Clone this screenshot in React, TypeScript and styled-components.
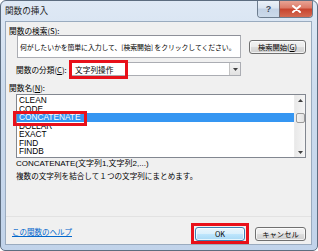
import React from 'react'
import styled, { createGlobalStyle } from 'styled-components'

const jp = `"Noto Sans CJK JP", "Noto Sans", sans-serif`
const latin = `"Liberation Sans", Arial, sans-serif`

const GlobalStyle = createGlobalStyle`
  html, body {
    margin: 0;
    padding: 0;
    background: #ffffff;
  }
  body {
    width: 318px;
    height: 251px;
    overflow: hidden;
    font-family: ${jp};
  }
  * { box-sizing: border-box; }
`

const Window = styled.div`
  width: 318px;
  height: 251px;
  display: flex;
  flex-direction: column;
  border: 1px solid #5d6d80;
  border-radius: 6px 6px 5px 5px;
  background: linear-gradient(180deg, #dfe9f5 0%, #cddcee 35%, #c1d3ea 100%);
  overflow: hidden;
`

const TitleBar = styled.div`
  height: 20px;
  flex: none;
  display: flex;
  align-items: flex-start;
`

const Title = styled.div`
  padding-left: 4px;
  line-height: 19px;
  font-size: 8.6px;
  color: #1e1e1e;
  font-family: ${jp};
`

const CaptionButtons = styled.div`
  margin-left: auto;
  margin-right: 4px;
  margin-top: -1px;
  display: flex;
  border: 1px solid #6d7d8f;
  border-top: none;
  border-radius: 0 0 4px 4px;
  overflow: hidden;
`

const CaptionButton = styled.div<{ $close?: boolean }>`
  height: 17px;
  width: ${p => (p.$close ? 33 : 21)}px;
  display: flex;
  align-items: center;
  justify-content: center;
  background: ${p =>
    p.$close
      ? 'linear-gradient(180deg, #e9a99b 0%, #dd7c69 45%, #c8452f 55%, #d36a52 100%)'
      : 'linear-gradient(180deg, #eef3f9 0%, #dbe5f1 45%, #c3d2e5 55%, #ccdaea 100%)'};
  border-left: ${p => (p.$close ? '1px solid #7a6a70' : 'none')};
  color: ${p => (p.$close ? '#ffffff' : '#3d4a5a')};
  font-family: ${latin};
  font-size: 9px;
  font-weight: bold;
`

const Client = styled.div`
  flex: 1;
  margin: 0 5px 5px 4px;
  background: #f0f0f0;
  border: 1px solid #9aabbf;
  display: flex;
  flex-direction: column;
  padding: 4px 5px 0 3px;
  font-family: ${jp};
  font-size: 7.7px;
  color: #000000;
`

const Label = styled.div<{ $indent?: number; $top?: number }>`
  height: 9px;
  line-height: 9px;
  padding-left: ${p => p.$indent ?? 0}px;
  margin-top: ${p => p.$top ?? 0}px;
  white-space: nowrap;
`

const U = styled.span`
  text-decoration: underline;
`

const SearchRow = styled.div`
  height: 23px;
  display: flex;
  align-items: center;
  padding-left: 8px;
`

const SearchBox = styled.div`
  width: 224px;
  height: 23px;
  background: #ffffff;
  border: 1px solid #abadb3;
  border-top-color: #8e9099;
  display: flex;
  align-items: center;
  padding-left: 2px;
  font-size: 6.9px;
  letter-spacing: -0.1px;
  white-space: nowrap;
  overflow: hidden;
`

const Button = styled.div<{ $w: number; $default?: boolean }>`
  width: ${p => p.$w}px;
  height: 14px;
  flex: none;
  display: flex;
  align-items: center;
  justify-content: center;
  border: 1px solid ${p => (p.$default ? '#3c7fb1' : '#707070')};
  border-radius: 3px;
  background: ${p =>
    p.$default
      ? 'linear-gradient(180deg, #eaf6fd 0%, #d9f0fc 50%, #bee6fd 51%, #a7d9f5 100%)'
      : 'linear-gradient(180deg, #f2f2f2 0%, #ebebeb 50%, #dddddd 51%, #cfcfcf 100%)'};
  box-shadow: inset 0 0 0 1px rgba(255, 255, 255, 0.7);
  font-size: 7.3px;
  white-space: nowrap;
  color: #000000;
`

const SearchButton = styled(Button)`
  margin-left: 8px;
`

const CategoryRow = styled.div`
  margin-top: 4px;
  height: 14px;
  display: flex;
  align-items: center;
  padding-left: 7px;
`

const CategoryLabel = styled.div`
  width: 54px;
  white-space: nowrap;
`

const Combo = styled.div`
  position: relative;
  width: 171px;
  height: 14px;
  background: #ffffff;
  border: 1px solid #abadb3;
  display: flex;
  align-items: center;
  padding-left: 4px;
`

const ComboValue = styled.div`
  flex: 1;
  white-space: nowrap;
`

const ComboArrow = styled.div`
  width: 11px;
  height: 12px;
  border-left: 1px solid #c3c3c3;
  background: linear-gradient(180deg, #f4f4f4 0%, #e2e2e2 100%);
  display: flex;
  align-items: center;
  justify-content: center;
`

const Mark = styled.div<{ $top: number; $left: number; $w: number; $h: number }>`
  position: absolute;
  top: ${p => p.$top}px;
  left: ${p => p.$left}px;
  width: ${p => p.$w}px;
  height: ${p => p.$h}px;
  border: 3px solid #e8101a;
  pointer-events: none;
`

const ListWrap = styled.div`
  position: relative;
  margin-top: 2px;
  margin-left: 7px;
`

const ListBox = styled.div`
  height: 64px;
  background: #ffffff;
  border: 1px solid #828790;
  display: flex;
`

const Items = styled.div`
  flex: 1;
  padding-top: 1px;
`

const Item = styled.div<{ $selected?: boolean }>`
  height: 8.5px;
  line-height: 8.5px;
  padding-left: 2px;
  font-family: ${latin};
  font-size: 8.3px;
  color: ${p => (p.$selected ? '#ffffff' : '#000000')};
  background: ${p => (p.$selected ? '#3596f2' : 'transparent')};
`

const ScrollBar = styled.div`
  width: 11px;
  display: flex;
  flex-direction: column;
  background: linear-gradient(90deg, #e9e9e9 0%, #f5f5f5 100%);
  border-left: 1px solid #ececec;
`

const ScrollArrow = styled.div`
  height: 10px;
  display: flex;
  align-items: center;
  justify-content: center;
`

const ScrollTrack = styled.div`
  flex: 1;
  padding-top: 8px;
`

const Thumb = styled.div`
  height: 10px;
  margin: 0 0.5px;
  border: 1px solid #9a9a9a;
  border-radius: 2px;
  background: linear-gradient(90deg, #f3f3f3 0%, #e2e2e2 100%);
`

const Desc = styled.div<{ $top: number; $latin?: boolean }>`
  margin-top: ${p => p.$top}px;
  padding-left: 7px;
  height: 9px;
  line-height: 9px;
  white-space: nowrap;
  font-family: ${p => (p.$latin ? `"Liberation Sans", "Noto Sans CJK JP", sans-serif` : jp)};
  font-size: ${p => (p.$latin ? 8 : 7.6)}px;
`

const Footer = styled.div`
  margin-top: auto;
  margin-left: -3px;
  margin-right: -5px;
  border-top: 1px solid #e2e2e2;
  padding: 9px 5px 3px 6px;
  display: flex;
  align-items: center;
`

const HelpLink = styled.div`
  color: #0066cc;
  text-decoration: underline;
  font-size: 7.5px;
  margin-bottom: 4px;
  white-space: nowrap;
`

const OkWrap = styled.div`
  position: relative;
  margin-left: auto;
`

const CancelButton = styled(Button)`
  margin-left: 10px;
`

const functions = ['CLEAN', 'CODE', 'CONCATENATE', 'DOLLAR', 'EXACT', 'FIND', 'FINDB']

const Tri: React.FC<{ up?: boolean }> = ({ up }) => (
  <svg width="5" height="3" viewBox="0 0 5 3">
    <path d={up ? 'M0 3 L2.5 0 L5 3 Z' : 'M0 0 L5 0 L2.5 3 Z'} fill="#404040" />
  </svg>
)

export default function App() {
  return (
    <>
      <GlobalStyle />
      <Window>
        <TitleBar>
          <Title>関数の挿入</Title>
          <CaptionButtons>
            <CaptionButton>?</CaptionButton>
            <CaptionButton $close>
              <svg width="9" height="8" viewBox="0 0 9 8">
                <path d="M1 1 L8 7 M8 1 L1 7" stroke="#ffffff" strokeWidth="2" strokeLinecap="round" />
              </svg>
            </CaptionButton>
          </CaptionButtons>
        </TitleBar>
        <Client>
          <Label>
            関数の検索(<U>S</U>):
          </Label>
          <SearchRow>
            <SearchBox>何がしたいかを簡単に入力して、[検索開始] をクリックしてください。</SearchBox>
            <SearchButton $w={57}>
              検索開始(<U>G</U>)
            </SearchButton>
          </SearchRow>
          <CategoryRow>
            <CategoryLabel>
              関数の分類(<U>C</U>):
            </CategoryLabel>
            <Combo>
              <ComboValue>文字列操作</ComboValue>
              <ComboArrow>
                <Tri />
              </ComboArrow>
              <Mark $top={-3} $left={-2} $w={59} $h={19} />
            </Combo>
          </CategoryRow>
          <Label $top={7}>
            関数名(<U>N</U>):
          </Label>
          <ListWrap>
            <ListBox>
              <Items>
                {functions.map(name => (
                  <Item key={name} $selected={name === 'CONCATENATE'}>
                    {name}
                  </Item>
                ))}
              </Items>
              <ScrollBar>
                <ScrollArrow>
                  <Tri up />
                </ScrollArrow>
                <ScrollTrack>
                  <Thumb />
                </ScrollTrack>
                <ScrollArrow>
                  <Tri />
                </ScrollArrow>
              </ScrollBar>
            </ListBox>
            <Mark $top={17} $left={-3} $w={74} $h={15} />
          </ListWrap>
          <Desc $top={1} $latin>
            CONCATENATE(文字列1,文字列2,...)
          </Desc>
          <Desc $top={3}>複数の文字列を結合して１つの文字列にまとめます。</Desc>
          <Footer>
            <HelpLink>この関数のヘルプ</HelpLink>
            <OkWrap>
              <Button $w={50} $default>
                OK
              </Button>
              <Mark $top={-4} $left={-4} $w={58} $h={21} />
            </OkWrap>
            <CancelButton $w={51}>キャンセル</CancelButton>
          </Footer>
        </Client>
      </Window>
    </>
  )
}
